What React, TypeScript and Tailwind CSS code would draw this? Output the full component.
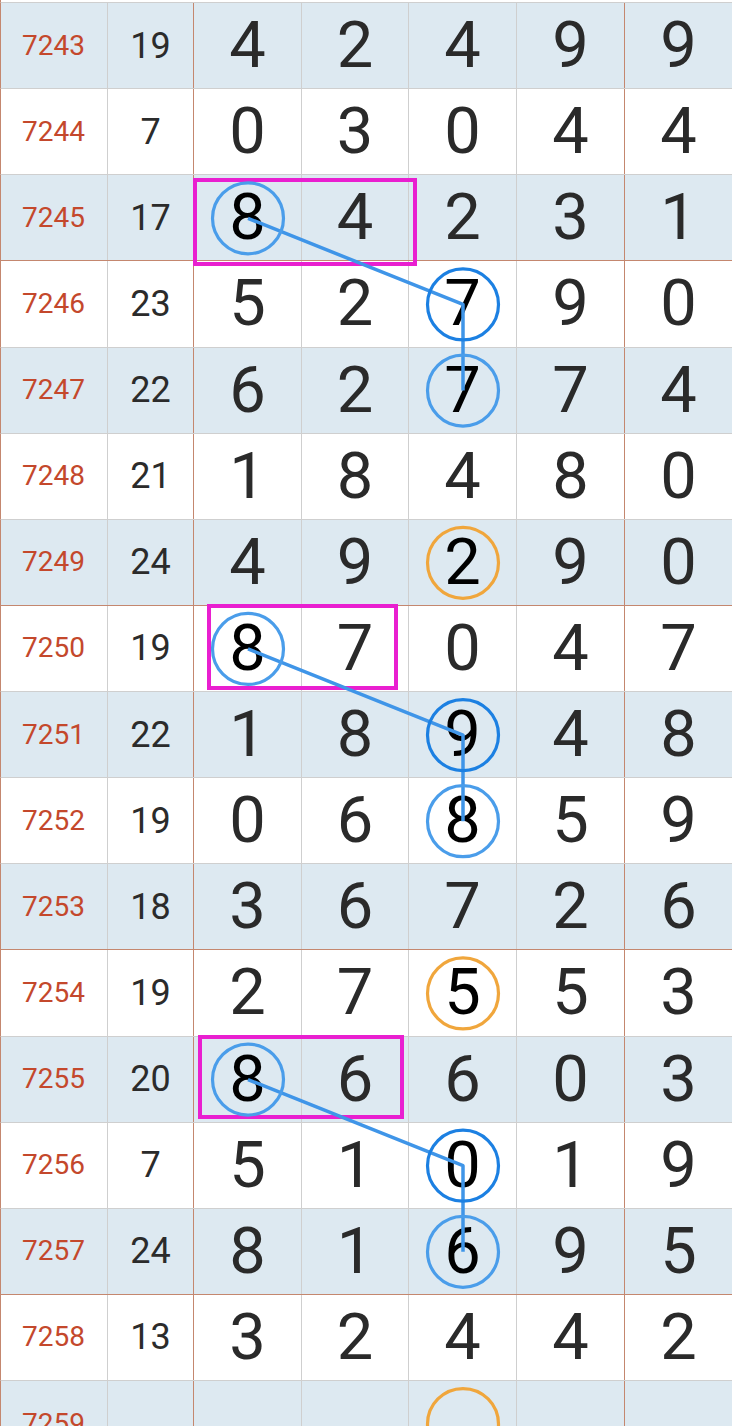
import React from 'react';

// ─── Data ─────────────────────────────────────────────────────────────────────

interface Row {
  period: string;
  sum: string;
  digits: string[];
}

const ROWS: Row[] = [
  { period: '7243', sum: '19', digits: ['4', '2', '4', '9', '9'] },
  { period: '7244', sum: '7', digits: ['0', '3', '0', '4', '4'] },
  { period: '7245', sum: '17', digits: ['8', '4', '2', '3', '1'] },
  { period: '7246', sum: '23', digits: ['5', '2', '7', '9', '0'] },
  { period: '7247', sum: '22', digits: ['6', '2', '7', '7', '4'] },
  { period: '7248', sum: '21', digits: ['1', '8', '4', '8', '0'] },
  { period: '7249', sum: '24', digits: ['4', '9', '2', '9', '0'] },
  { period: '7250', sum: '19', digits: ['8', '7', '0', '4', '7'] },
  { period: '7251', sum: '22', digits: ['1', '8', '9', '4', '8'] },
  { period: '7252', sum: '19', digits: ['0', '6', '8', '5', '9'] },
  { period: '7253', sum: '18', digits: ['3', '6', '7', '2', '6'] },
  { period: '7254', sum: '19', digits: ['2', '7', '5', '5', '3'] },
  { period: '7255', sum: '20', digits: ['8', '6', '6', '0', '3'] },
  { period: '7256', sum: '7', digits: ['5', '1', '0', '1', '9'] },
  { period: '7257', sum: '24', digits: ['8', '1', '6', '9', '5'] },
  { period: '7258', sum: '13', digits: ['3', '2', '4', '4', '2'] },
  { period: '7259', sum: '', digits: ['', '', '', '', ''] },
];

const ROW_H = 86.125;
const TOP = 3;
const COL_X = [248, 355.5, 463, 571, 678.5];

type Mark = { row: number; col: number; tone: 'dark' | 'light' | 'orange' };

const MARKS: Mark[] = [
  { row: 2, col: 0, tone: 'light' },
  { row: 3, col: 2, tone: 'dark' },
  { row: 4, col: 2, tone: 'light' },
  { row: 6, col: 2, tone: 'orange' },
  { row: 7, col: 0, tone: 'light' },
  { row: 8, col: 2, tone: 'dark' },
  { row: 9, col: 2, tone: 'light' },
  { row: 11, col: 2, tone: 'orange' },
  { row: 12, col: 0, tone: 'light' },
  { row: 13, col: 2, tone: 'dark' },
  { row: 14, col: 2, tone: 'light' },
  { row: 16, col: 2, tone: 'orange' },
];

// chains of linked picks: 8 → col 3 next row → col 3 the row after
const CHAINS = [
  [[2, 0], [3, 2], [4, 2]],
  [[7, 0], [8, 2], [9, 2]],
  [[12, 0], [13, 2], [14, 2]],
];

const BOXES = [
  { x: 195, y: 180, w: 220, h: 84 },
  { x: 209, y: 606, w: 187, h: 82 },
  { x: 200, y: 1037, w: 202, h: 80 },
];

const TONE: Record<Mark['tone'], string> = {
  dark: '#1c80e2',
  light: '#4a9dea',
  orange: '#f0a63c',
};

const cy = (r: number) => TOP + ROW_H * r + ROW_H / 2;
const isMarked = (r: number, c: number) => MARKS.some((m) => m.row === r && m.col === c);

// ─── Component ────────────────────────────────────────────────────────────────

export default function App() {
  return (
    <div
      className="relative w-[732px] h-[1426px] overflow-hidden bg-white"
      style={{ fontFamily: 'Roboto, "Noto Sans", sans-serif' }}
    >
      <div className="h-[3px] border-b border-[#cfcfcf] border-l border-l-[#c4876f]" />

      {ROWS.map((row, i) => {
        const strong = i % 4 === 2;
        return (
          <div
            key={row.period}
            className={[
              'grid grid-cols-[107px_86px_108px_107px_108px_108px_108px] h-[86.125px] border-b border-l border-l-[#c4876f]',
              strong ? 'border-b-[#c4876f]' : 'border-b-[#cfcfcf]',
              i % 2 === 0 ? 'bg-[#dde9f1]' : 'bg-white',
            ].join(' ')}
          >
            <div className="flex items-center justify-center border-r border-[#cfcfcf] text-[28px] text-[#c4482c] pr-px">
              {row.period}
            </div>
            <div className="flex items-center justify-center border-r border-[#c4876f] text-[36px] text-[#2b2b2b]">
              {row.sum}
            </div>
            {row.digits.map((d, c) => (
              <div
                key={c}
                className={[
                  'flex items-center justify-center border-r text-[65px] leading-none',
                  c === 3 || c === 4 ? 'border-[#c4876f]' : 'border-[#cfcfcf]',
                  c === 4 ? 'border-r-[#e3b9ad]' : '',
                  isMarked(i, c) ? 'text-black' : 'text-[#2a2a2a]',
                ].join(' ')}
              >
                {d}
              </div>
            ))}
          </div>
        );
      })}

      {/* ── Markings overlay ── */}
      <svg
        className="absolute inset-0 pointer-events-none"
        width="732"
        height="1426"
        viewBox="0 0 732 1426"
        fill="none"
      >
        {BOXES.map((b, k) => (
          <rect key={k} x={b.x} y={b.y} width={b.w} height={b.h} stroke="#e91fd0" strokeWidth={4} />
        ))}
        {CHAINS.map((ch, k) => (
          <polyline
            key={k}
            points={ch.map(([r, c]) => `${COL_X[c]},${cy(r)}`).join(' ')}
            stroke="#3f95e8"
            strokeWidth={3.5}
            strokeLinejoin="round"
          />
        ))}
        {MARKS.map((m, k) => (
          <circle
            key={k}
            cx={COL_X[m.col]}
            cy={cy(m.row)}
            r={35.5}
            stroke={TONE[m.tone]}
            strokeWidth={3.2}
          />
        ))}
      </svg>
    </div>
  );
}
